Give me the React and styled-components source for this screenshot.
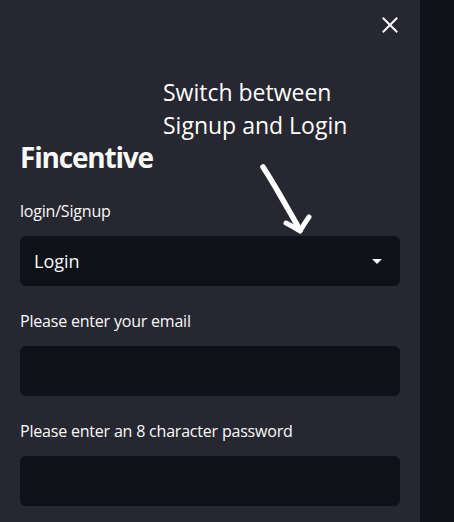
import React from "react";
import styled, { createGlobalStyle } from "styled-components";

const GlobalStyle = createGlobalStyle`
	html, body {
		margin: 0;
		padding: 0;
		background: #0e1117;
		color: #fafafa;
		font-family: "Open Sans", "Liberation Sans", sans-serif;
	}
	* {
		box-sizing: border-box;
	}
`;

const Page = styled.div`
	display: flex;
	width: 100%;
	height: 100vh;
	background: #0e1117;
	overflow: hidden;
`;

const Sidebar = styled.aside`
	position: relative;
	width: 420px;
	flex-shrink: 0;
	height: 100%;
	background: #262730;
	padding: 0 20px;
	display: flex;
	flex-direction: column;
`;

const CloseRow = styled.div`
	height: 48px;
	display: flex;
	justify-content: flex-end;
	align-items: center;
`;

const CloseButton = styled.button`
	width: 20px;
	height: 20px;
	padding: 0;
	border: none;
	background: transparent;
	display: flex;
	align-items: center;
	justify-content: center;
	cursor: pointer;
	margin-top: 2px;
`;

const Title = styled.h1`
	margin: 91px 0 0;
	font-size: 28px;
	font-weight: 700;
	line-height: 36px;
	letter-spacing: -1.2px;
	color: #fafafa;
`;

const Field = styled.div`
	display: flex;
	flex-direction: column;
	gap: 13px;
	margin-top: ${(props) => props.spacing || "23px"};
`;

const Label = styled.label`
	font-size: 16px;
	line-height: 24px;
	letter-spacing: -0.2px;
	color: #fafafa;
`;

const Box = styled.div`
	height: 50px;
	border-radius: 6px;
	background: #0e1117;
	display: flex;
	align-items: center;
	justify-content: space-between;
	padding: 0 18px 0 14px;
`;

const SelectValue = styled.span`
	font-size: 18px;
	color: #fafafa;
`;

const Caret = styled.span`
	width: 0;
	height: 0;
	border-left: 5px solid transparent;
	border-right: 5px solid transparent;
	border-top: 5px solid #fafafa;
`;

const Annotation = styled.div`
	position: absolute;
	left: 163px;
	top: 76px;
	font-family: "Open Sans", sans-serif;
	font-size: 23px;
	line-height: 33px;
	color: #ffffff;
	pointer-events: none;
`;

const Arrow = styled.svg`
	position: absolute;
	left: 250px;
	top: 155px;
	pointer-events: none;
`;

const Main = styled.main`
	flex: 1;
	background: #0e1117;
`;

export default function App() {
	return (
		<>
			<GlobalStyle />
			<Page>
				<Sidebar>
					<CloseRow>
						<CloseButton aria-label="Close sidebar">
							<svg width="16" height="16" viewBox="0 0 16 16">
								<path
									d="M1.5 1.5 L14.5 14.5 M14.5 1.5 L1.5 14.5"
									stroke="#fafafa"
									strokeWidth="2"
									strokeLinecap="square"
								/>
							</svg>
						</CloseButton>
					</CloseRow>

					<Title>Fincentive</Title>

					<Field spacing="24px">
						<Label>login/Signup</Label>
						<Box>
							<SelectValue>Login</SelectValue>
							<Caret />
						</Box>
					</Field>

					<Field>
						<Label>Please enter your email</Label>
						<Box />
					</Field>

					<Field>
						<Label>Please enter an 8 character password</Label>
						<Box />
					</Field>

					<Annotation>
						Switch between
						<br />
						Signup and Login
					</Annotation>
					<Arrow width="70" height="85" viewBox="0 0 70 85">
						<path
							d="M13 12 C17 18 23 28 30 40 C38 54 45 66 50 75"
							stroke="#ffffff"
							strokeWidth="5.5"
							fill="none"
							strokeLinecap="round"
						/>
						<path
							d="M36 68 C42 71 47 74 50 76 C53 71 56 66 59 62"
							stroke="#ffffff"
							strokeWidth="5"
							fill="none"
							strokeLinecap="round"
							strokeLinejoin="round"
						/>
					</Arrow>
				</Sidebar>
				<Main />
			</Page>
		</>
	);
}
